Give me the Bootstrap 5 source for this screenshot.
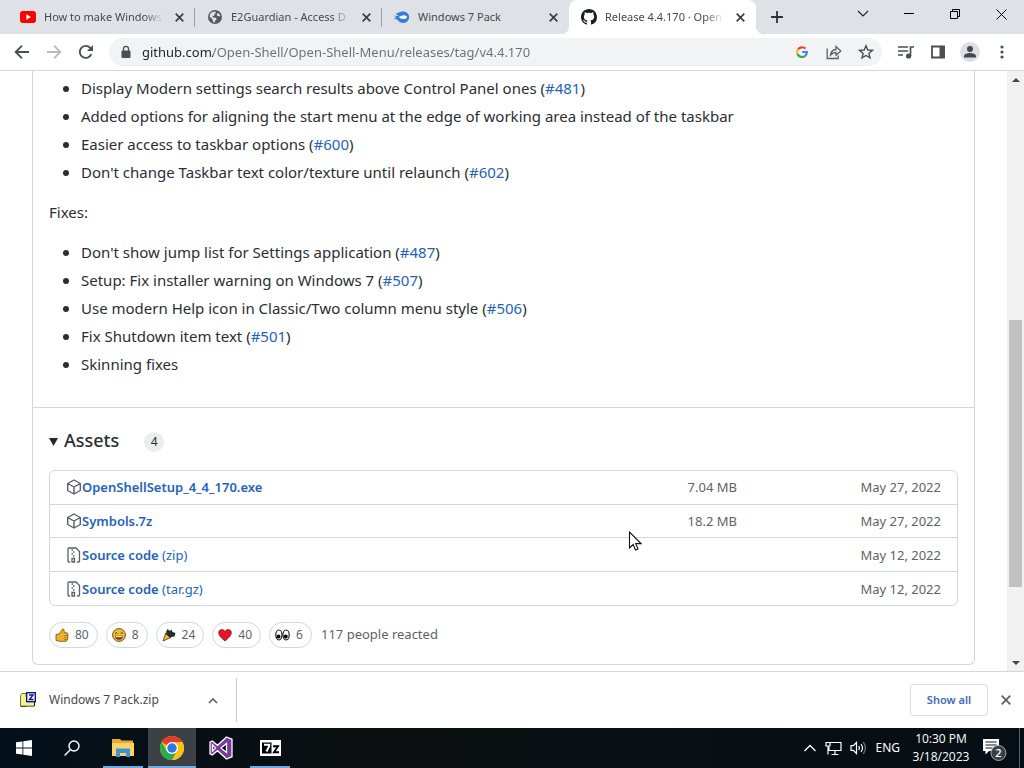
<!DOCTYPE html>
<html lang="en">
<head>
<meta charset="utf-8">
<meta name="viewport" content="width=device-width, initial-scale=1">
<title>Release 4.4.170 · Open-Shell/Open-Shell-Menu</title>
<link href="https://cdn.jsdelivr.net/npm/bootstrap@5.3.0/dist/css/bootstrap.min.css" rel="stylesheet">
<style>
:root { --ui: "Noto Sans", "Open Sans", sans-serif; --grey: #5f6368; --line: #d4d7da; --link: #2463b8; }
body { font-family: var(--ui); color: #2a2e33; background: #fff; }
button { font-family: inherit; color: inherit; }
.ghost { background: none; border: 0; padding: 0; display: flex; align-items: center; justify-content: center; flex: none; }
svg { display: block; flex: none; }

/* tab strip */
.strip { background: #dee1e6; height: 34px; padding-left: 8px; flex: none; }
.tab { flex: 0 1 187px; min-width: 0; height: 34px; padding: 0 8px 0 12px; gap: 8px; font-size: 11px; color: #45494d; position: relative; }
.tab-title { flex: 1 1 0; min-width: 0; overflow: hidden; white-space: nowrap; color: inherit; text-decoration: none;
  -webkit-mask-image: linear-gradient(to right, #000 84%, transparent); mask-image: linear-gradient(to right, #000 84%, transparent); }
.tab-title.whole { -webkit-mask-image: none; mask-image: none; }
.tab.split::after { content: ""; position: absolute; right: 0; top: 8px; width: 1px; height: 19px; background: #9a9da2; }
.tab.current { background: #fff; border-radius: 8px 8px 0 0; }
.tab.current::before, .tab.current::after { content: ""; position: absolute; bottom: 0; width: 8px; height: 8px; }
.tab.current::before { left: -8px; background: radial-gradient(circle at 0 0, transparent 8px, #fff 8px); }
.tab.current::after { right: -8px; background: radial-gradient(circle at 100% 0, transparent 8px, #fff 8px); }
.close { width: 16px; height: 16px; }
.newtab { width: 42px; height: 34px; }
.win { width: 46px; height: 28px; }

/* toolbar */
.tools { height: 37px; padding: 0 6px; flex: none; border-bottom: 1px solid #d5d7da; color: var(--grey); }
.tool { width: 32px; height: 28px; }
.omni { background: #f1f3f4; border-radius: 14px; height: 28px; margin: 0 8px 0 7px; padding-left: 10px; }
.url { font-family: var(--ui); font-size: 13px; border: 0; outline: 0; padding: 0; height: 28px; color: #5f6368; margin-left: 9px;
  background: linear-gradient(to right, #202124 71px, #6b6f73 71px); -webkit-background-clip: text; background-clip: text; -webkit-text-fill-color: transparent; }
.avatar { width: 20px; height: 20px; }

/* page */
.release { border: solid var(--line); border-width: 0 1px 1px; border-radius: 0 0 6px 6px; }
.notes { padding: 5px 16px 31px; font-size: 15px; line-height: 24px; border-bottom: 1px solid var(--line); }
.notes ul { list-style: none; padding-left: 32px; margin-bottom: 16px; }
.notes ul:last-child { margin-bottom: 0; }
.notes li + li { margin-top: 4px; }
.notes li::before { content: ""; display: inline-block; width: 6px; height: 6px; margin: 0 12px 2px -18px; border-radius: 3px; background: currentColor; }
.notes a, .assets a { color: var(--link); text-decoration: none; }
.lower { padding: 16px; }
.lower summary { list-style: none; height: 32px; margin-bottom: 14px; }
.lower summary::-webkit-details-marker { display: none; }
.lower h3 { font-size: 18px; line-height: 32px; font-weight: 500; margin: 0 25px 0 6px; }
.counter { font-size: 12px; line-height: 20px; width: 20px; height: 20px; background: #ebedee; border-radius: 10px; text-align: center; margin-top: 4px; }
.frame { border: 1px solid var(--line); border-radius: 6px; }
.assets { height: 134px; font-size: 13px; line-height: 20px; color: #5d6369; width: 100%; }
.assets td { padding: 0; }
.assets td:first-child { padding-left: 16px; }
.assets td:last-child { padding-right: 16px; width: 220px; }
.assets tr + tr { border-top: 1px solid var(--line); }
.assets b { font-weight: 600; }
.react { height: 26px; border: 1px solid var(--line); border-radius: 13px; background: #fff; padding: 0 8px 0 5px; gap: 6px; font-size: 12px; color: #5d6369; display: flex; align-items: center; }
.reacted { font-size: 13px; color: #5d6369; margin-left: 1px; }

/* scrollbar */
.rail { width: 17px; background: #f1f1f1; flex: none; }
.rail .ghost { width: 17px; height: 17px; }
.thumb { flex: 267 0 0; background: #c1c1c1; width: 13px; }

/* downloads shelf */
.shelf { height: 57px; border-top: 1px solid #d5d7da; flex: none; padding-right: 10px; color: #45494d; }
.dl { width: 237px; height: 44px; padding: 0 15px 0 20px; border-right: 1px solid #c8cacd; font-size: 12px; }
.dl-name { padding-left: 13px; }
.showall { width: 78px; height: 32px; margin-right: 10px; border: 1px solid #dadce0; border-radius: 4px; background: #fff; color: #3f69b5; font-size: 11px; font-weight: 600; padding: 0; }

/* taskbar */
.task { height: 40px; background: linear-gradient(to right, #03101a, #0b0f11 35%, #060e15); color: #fff; flex: none; }
.apps { gap: 1px; margin-left: 3px; }
.app { width: 48px; height: 40px; position: relative; }
.app.open::after { content: ""; position: absolute; left: 4px; right: 4px; bottom: 0; height: 2px; background: #6fa9df; }
.app.front { background: #3b4144; }
.app.front::after { left: 0; right: 0; }
.tray { font-size: 12px; }
.clock { font-family: "Open Sans", sans-serif; font-size: 12px; line-height: 18px; width: 58px; text-align: center; }
.note { margin: 0 12px; }
.desk { width: 5px; height: 40px; border-left: 1px solid #596066; }
.pointer { position: absolute; left: 628px; top: 531px; pointer-events: none; }
</style>
</head>
<body class="vh-100 d-flex flex-column overflow-hidden position-relative">

<header class="strip d-flex align-items-center">
  <div class="tab split d-flex align-items-center">
    <svg width="16" height="16" viewBox="0 0 16 16"><rect y="2" width="16" height="12" rx="3" fill="#f00"/><path d="M6.4 5.3v5.4L11 8z" fill="#fff"/></svg>
    <a href="#" class="tab-title">How to make Windows</a>
    <button class="ghost close" aria-label="Close tab"><svg width="9" height="9" viewBox="0 0 9 9" stroke="#3c4043" stroke-width="1.7"><path d="M.7.7l7.6 7.6M8.3.7L.7 8.3"/></svg></button>
  </div>
  <div class="tab split d-flex align-items-center">
    <svg width="16" height="16" viewBox="0 0 16 16"><circle cx="8" cy="8" r="7" fill="#55595e"/><path d="M3 5.500C4 3.300 6 2.600 8.200 2.500L9 4 7.500 5v1.500l-2 .5.5 1.500 3 .3.8 1.500-1.800 1.500v1.700c-1.500 0-2-.8-2-1.800L4.500 9 2.600 8z" fill="#dee1e6"/><path d="M10.500 4l2 1 1 2.500-1.700-.5-1.500.3-.5-1.500z" fill="#dee1e6"/></svg>
    <a href="#" class="tab-title">E2Guardian - Access D</a>
    <button class="ghost close" aria-label="Close tab"><svg width="9" height="9" viewBox="0 0 9 9" stroke="#3c4043" stroke-width="1.7"><path d="M.7.7l7.6 7.6M8.3.7L.7 8.3"/></svg></button>
  </div>
  <div class="tab d-flex align-items-center">
    <svg width="16" height="16" viewBox="0 0 16 16"><path d="M2 4.500C4.500 4 5.500 2.500 9.500 2.500a5.700 5.700 0 0 1 0 11.400c-3 0-4.800-1.400-6-3.200L0 9.500c.7-.7 1.700-.7 2.700-.9C1.500 8 .8 7.400.5 6.600c1.500.5 2.800.4 3.700-.2C3.300 6 2.500 5.400 2 4.500z" fill="#3a7bd5"/><ellipse cx="9.800" cy="8.100" rx="3" ry="1.900" fill="#fff"/><path d="M5 7.400l5-.3v2L6 9.600z" fill="#fff"/></svg>
    <a href="#" class="tab-title whole">Windows 7 Pack</a>
    <button class="ghost close" aria-label="Close tab"><svg width="9" height="9" viewBox="0 0 9 9" stroke="#3c4043" stroke-width="1.7"><path d="M.7.7l7.6 7.6M8.3.7L.7 8.3"/></svg></button>
  </div>
  <div class="tab current d-flex align-items-center">
    <svg width="16" height="16" viewBox="0 0 16 16" fill="#1b1f23"><path d="M8 0C3.580 0 0 3.580 0 8c0 3.540 2.290 6.530 5.470 7.590.4.070.55-.17.55-.38 0-.19-.01-.82-.01-1.490-2.010.37-2.530-.49-2.690-.94-.09-.23-.48-.94-.82-1.130-.28-.15-.68-.52-.01-.53.63-.01 1.080.58 1.230.82.72 1.210 1.870.87 2.330.66.07-.52.28-.87.51-1.070-1.780-.2-3.640-.89-3.640-3.950 0-.87.31-1.590.82-2.150-.08-.2-.36-1.020.08-2.120 0 0 .67-.21 2.200.82.64-.18 1.320-.27 2-.27s1.360.09 2 .27c1.530-1.040 2.200-.82 2.200-.82.44 1.100.16 1.920.08 2.120.51.56.82 1.270.82 2.150 0 3.070-1.870 3.750-3.650 3.950.29.25.54.73.54 1.480 0 1.070-.01 1.930-.01 2.200 0 .21.15.46.55.38A8.010 8.010 0 0 0 16 8c0-4.420-3.580-8-8-8z"/></svg>
    <a href="#" class="tab-title">Release 4.4.170 · Open</a>
    <button class="ghost close" aria-label="Close tab"><svg width="9" height="9" viewBox="0 0 9 9" stroke="#3c4043" stroke-width="1.7"><path d="M.7.7l7.6 7.6M8.3.7L.7 8.3"/></svg></button>
  </div>
  <button class="ghost newtab" aria-label="New tab"><svg width="12" height="12" viewBox="0 0 12 12" stroke="#2f3337" stroke-width="1.800"><path d="M6 0v12M0 6h12"/></svg></button>
  <div class="d-flex ms-auto align-self-start">
    <button class="ghost win" aria-label="Search tabs"><svg width="12" height="8" viewBox="0 0 12 8" fill="none" stroke="#222" stroke-width="1.100"><path d="M1 1l5 5 5-5"/></svg></button>
    <button class="ghost win" aria-label="Minimise"><svg width="10" height="2" viewBox="0 0 10 2"><path d="M0 0h10v1H0z"/></svg></button>
    <button class="ghost win" aria-label="Restore"><svg width="10" height="10" viewBox="0 0 10 10" fill="none" stroke="#000"><path d="M.5 2.500h7v7h-7zM2.500 2.500v-2h7v7h-2"/></svg></button>
    <button class="ghost win" aria-label="Close"><svg width="11" height="11" viewBox="0 0 11 11" stroke="#000"><path d="M.5.5l10 10M10.500.5l-10 10"/></svg></button>
  </div>
</header>

<nav class="tools d-flex align-items-center" aria-label="Browser toolbar">
  <button class="ghost tool" aria-label="Back"><svg width="16" height="16" viewBox="0 0 16 16" fill="none" stroke="#4b4f53" stroke-width="1.900"><path d="M15 8H2M8 1.700L1.700 8 8 14.300"/></svg></button>
  <button class="ghost tool" aria-label="Forward"><svg width="16" height="16" viewBox="0 0 16 16" fill="none" stroke="#b9bbbe" stroke-width="1.900"><path d="M1 8h13M8 1.700L14.300 8 8 14.300"/></svg></button>
  <button class="ghost tool" aria-label="Reload"><svg width="16" height="16" viewBox="0 0 16 16"><path d="M13.300 10.200A6 6 0 1 1 12.200 3.800L14 5.500" fill="none" stroke="#4b4f53" stroke-width="1.900"/><path d="M15 1v6H9z" fill="#4b4f53"/></svg></button>
  <div class="omni d-flex align-items-center flex-grow-1">
    <svg width="14" height="14" viewBox="0 0 14 14"><rect x="2.500" y="5.500" width="9" height="7.500" rx="1" fill="#4b4f53"/><path d="M4.500 6V3.800a2.500 2.500 0 0 1 5 0V6" fill="none" stroke="#4b4f53" stroke-width="1.300"/></svg>
    <input class="url flex-grow-1" type="text" aria-label="Address" value="github.com/Open-Shell/Open-Shell-Menu/releases/tag/v4.4.170">
    <button class="ghost tool" aria-label="Search with Google"><svg width="12" height="12" viewBox="0 0 12 12" fill="none" stroke-width="2.200"><path d="M2 3.500A4.900 4.900 0 0 1 9.500 2.600" stroke="#ea4335"/><path d="M1.500 8.200a4.900 4.900 0 0 1 .3-4.500" stroke="#fbbc05"/><path d="M1.500 8a4.900 4.900 0 0 0 7.800 1.700" stroke="#34a853"/><path d="M9 9.800A4.500 4.500 0 0 0 10.900 6H6.200" stroke="#4285f4"/></svg></button>
    <button class="ghost tool" aria-label="Share"><svg width="16" height="16" viewBox="0 0 16 16" fill="none" stroke="#5f6368" stroke-width="1.300"><path d="M1.200 4.500v10h11v-3M4.500 11C5 7.500 7 5.700 10 5.500V2.500l4.800 4.500-4.800 4.300V8.500C7.500 8.500 5.800 9.300 4.500 11z"/></svg></button>
    <button class="ghost tool" aria-label="Bookmark"><svg width="16" height="16" viewBox="0 0 16 16" fill="none" stroke="#4b4f53" stroke-width="1.400"><path d="M8 1.800l1.800 4.200 4.600.4-3.500 3 1.100 4.500L8 11.500l-4 2.400 1.100-4.500-3.500-3L6.200 6z"/></svg></button>
  </div>
  <button class="ghost tool" aria-label="Media controls"><svg width="18" height="16" viewBox="0 0 18 16"><path d="M1 3h10M1 7h10M1 11h5M13.500 12V3H17" fill="none" stroke="#4b4f53" stroke-width="1.700"/><circle cx="11.600" cy="12" r="2.600" fill="#4b4f53"/></svg></button>
  <button class="ghost tool" aria-label="Side panel"><svg width="14" height="14" viewBox="0 0 14 14"><path d="M1 1.500h12v11H1z" fill="none" stroke="#4b4f53" stroke-width="1.800"/><path d="M8.500 1H14v12H8.500z" fill="#4b4f53"/></svg></button>
  <button class="ghost tool" aria-label="Profile"><svg class="avatar" viewBox="0 0 20 20"><circle cx="10" cy="10" r="10" fill="#dcdfe5"/><circle cx="10" cy="7" r="3" fill="#44484e"/><path d="M4 15.500v-1.300c0-2 3.500-3.200 6-3.200s6 1.200 6 3.200v1.300z" fill="#44484e"/></svg></button>
  <button class="ghost tool" aria-label="Menu"><svg width="4" height="14" viewBox="0 0 4 14" fill="#4b4f53"><circle cx="2" cy="2" r="1.600"/><circle cx="2" cy="7" r="1.600"/><circle cx="2" cy="12" r="1.600"/></svg></button>
</nav>

<div class="d-flex flex-grow-1 overflow-hidden">
  <main class="flex-grow-1 overflow-hidden px-4">
    <article class="release mx-2">
      <section class="notes">
        <ul>
          <li>Display Modern settings search results above Control Panel ones (<a href="#">#481</a>)</li>
          <li>Added options for aligning the start menu at the edge of working area instead of the taskbar</li>
          <li>Easier access to taskbar options (<a href="#">#600</a>)</li>
          <li>Don't change Taskbar text color/texture until relaunch (<a href="#">#602</a>)</li>
        </ul>
        <p class="mb-3">Fixes:</p>
        <ul>
          <li>Don't show jump list for Settings application (<a href="#">#487</a>)</li>
          <li>Setup: Fix installer warning on Windows 7 (<a href="#">#507</a>)</li>
          <li>Use modern Help icon in Classic/Two column menu style (<a href="#">#506</a>)</li>
          <li>Fix Shutdown item text (<a href="#">#501</a>)</li>
          <li>Skinning fixes</li>
        </ul>
      </section>
      <section class="lower">
        <details open>
          <summary class="d-flex align-items-center">
            <svg class="mt-1" width="9" height="8" viewBox="0 0 9 8" fill="#24292f"><path d="M0 0h9L4.500 8z"/></svg>
            <h3>Assets</h3>
            <span class="counter">4</span>
          </summary>
          <div class="frame">
            <table class="assets">
              <tbody>
                <tr><td><div class="d-flex align-items-center"><svg width="16" height="16" viewBox="0 0 16 16" fill="none" stroke="#57606a" stroke-width="1.400" stroke-linejoin="round"><path d="M8 1l6.300 3.500v7L8 15l-6.300-3.500v-7zM1.700 4.500L8 8l6.300-3.500M8 8v7"/></svg><a href="#"><b>OpenShellSetup_4_4_170.exe</b></a></div></td><td class="text-end">7.04 MB</td><td class="text-end">May 27, 2022</td></tr>
                <tr><td><div class="d-flex align-items-center"><svg width="16" height="16" viewBox="0 0 16 16" fill="none" stroke="#57606a" stroke-width="1.400" stroke-linejoin="round"><path d="M8 1l6.300 3.500v7L8 15l-6.300-3.500v-7zM1.700 4.500L8 8l6.300-3.500M8 8v7"/></svg><a href="#"><b>Symbols.7z</b></a></div></td><td class="text-end">18.2 MB</td><td class="text-end">May 27, 2022</td></tr>
                <tr><td><div class="d-flex align-items-center"><svg width="16" height="16" viewBox="0 0 16 16" fill="none" stroke="#57606a" stroke-width="1.300"><path d="M4 15H3a1 1 0 0 1-1-1V2a1 1 0 0 1 1-1h7l3.500 3.500V14a1 1 0 0 1-1 1H11M6 15v-3.500h2.500V15zM5.500 3H7M7 5h1.500M5.500 7H7M7 9h1.500"/></svg><a href="#"><b>Source code</b> (zip)</a></div></td><td></td><td class="text-end">May 12, 2022</td></tr>
                <tr><td><div class="d-flex align-items-center"><svg width="16" height="16" viewBox="0 0 16 16" fill="none" stroke="#57606a" stroke-width="1.300"><path d="M4 15H3a1 1 0 0 1-1-1V2a1 1 0 0 1 1-1h7l3.500 3.500V14a1 1 0 0 1-1 1H11M6 15v-3.500h2.500V15zM5.500 3H7M7 5h1.500M5.500 7H7M7 9h1.500"/></svg><a href="#"><b>Source code</b> (tar.gz)</a></div></td><td></td><td class="text-end">May 12, 2022</td></tr>
              </tbody>
            </table>
          </div>
        </details>
        <div class="d-flex align-items-center gap-2 mt-3">
          <button class="react"><svg width="14" height="14" viewBox="0 0 14 14"><path d="M1 6.500L4 6l3.500-5 1.500.5.2 3L12.500 5l.5 2-.5 5-1.500 1.300H5L1 12.500z" fill="#eeb32b" stroke="#6b4a10" stroke-width=".8"/><path d="M9 7.500h3.500M9.200 9.500h3.300M9 11.500h3" stroke="#a36e10" stroke-width=".7"/></svg>80</button>
          <button class="react"><svg width="14" height="14" viewBox="0 0 14 14"><circle cx="7" cy="7" r="6.400" fill="#f2bd36" stroke="#5b4310" stroke-width=".9"/><path d="M3 5.500q1.200-1.500 2.400 0M8.600 5.500q1.200-1.500 2.400 0" fill="none" stroke="#4b3510"/><path d="M3 7.800h8a4 4 0 0 1-8 0z" fill="#6b4012"/><path d="M3.700 8.200h6.600v1H3.700z" fill="#fff"/></svg>8</button>
          <button class="react"><svg width="14" height="14" viewBox="0 0 14 14"><path d="M1 13L3.800 5l5 4.500z" fill="#f0b93a" stroke="#4b3510" stroke-width=".8"/><path d="M4 4l1.500-3L8 3l1.500-1.500 1 2.500L13.500 5l-1 3.500-3 .5-2-1z" fill="#25282b"/><path d="M3.800 5l5 4.500" stroke="#1b1b1b" stroke-width="1.500"/><path d="M7 4.500l1 1" stroke="#338" /></svg>24</button>
          <button class="react"><svg width="14" height="14" viewBox="0 0 14 14"><path d="M7 13C4.500 10.800.7 8 .7 4.500.7 1.200 5.300.4 7 3.500c1.700-3.100 6.300-2.300 6.300 1C13.300 8 9.500 10.800 7 13z" fill="#e8142c" stroke="#701018" stroke-width=".7"/></svg>40</button>
          <button class="react"><svg width="15" height="14" viewBox="0 0 15 14"><g fill="#fff" stroke="#1c1c1c" stroke-width="1.200"><ellipse cx="3.900" cy="7" rx="3.100" ry="5"/><ellipse cx="11.100" cy="7" rx="3.100" ry="5"/></g><circle cx="3.600" cy="8.500" r="1.900"/><circle cx="10.800" cy="8.500" r="1.900"/></svg>6</button>
          <span class="reacted">117 people reacted</span>
        </div>
      </section>
    </article>
  </main>
  <div class="rail d-flex flex-column align-items-center">
    <button class="ghost" aria-label="Scroll up"><svg width="8" height="4" viewBox="0 0 8 4" fill="#444"><path d="M0 4l4-4 4 4z"/></svg></button>
    <span style="flex:232 0 0"></span>
    <span class="thumb"></span>
    <span style="flex:67 0 0"></span>
    <button class="ghost" aria-label="Scroll down"><svg width="8" height="4" viewBox="0 0 8 4" fill="#444"><path d="M0 0l4 4 4-4z"/></svg></button>
  </div>
</div>

<section class="shelf d-flex align-items-center" aria-label="Downloads">
  <div class="dl d-flex align-items-center">
    <svg width="16" height="16" viewBox="0 0 16 16"><path d="M.5 3.500L2 1.500h4v13H.5z" fill="#f4f28a" stroke="#77762d"/><path d="M1 14h13.500V5" fill="#f4f28a" stroke="#111"/><path d="M1 5h13v8.500H1z" fill="#f4f28a"/><rect x="6.700" y=".7" width="8.600" height="9" fill="#fff" stroke="#14148c" stroke-width="1.400"/><path d="M9 3h4L9.500 7.500h4" fill="none" stroke="#14148c" stroke-width="1.400"/></svg>
    <span class="dl-name flex-grow-1">Windows 7 Pack.zip</span>
    <button class="ghost close" aria-label="Download options"><svg width="10" height="7" viewBox="0 0 10 7" fill="none" stroke="#5f6368" stroke-width="1.700"><path d="M1 6l4-4 4 4"/></svg></button>
  </div>
  <button class="showall ms-auto">Show all</button>
  <button class="ghost close" aria-label="Close downloads bar"><svg width="10" height="10" viewBox="0 0 10 10" stroke="#5f6368" stroke-width="1.800"><path d="M.7.7l8.600 8.600M9.300.7L.7 9.300"/></svg></button>
</section>

<footer class="task d-flex align-items-center">
  <button class="ghost app" aria-label="Start"><svg width="16" height="16" viewBox="0 0 16 16" fill="#fff"><path d="M0 2.300L6.500 1.400v6.100H0zM7.300 1.300L16 0v7.500H7.300zM0 8.400h6.500v6.200L0 13.700zM7.300 8.400H16V16l-8.700-1.300z"/></svg></button>
  <button class="ghost app" aria-label="Search"><svg width="16" height="16" viewBox="0 0 16 16" fill="none" stroke="#fff" stroke-width="1.400"><circle cx="10" cy="6" r="5"/><path d="M6.300 9.700L.6 15.400"/></svg></button>
  <div class="apps d-flex">
    <button class="ghost app open" aria-label="File Explorer"><svg width="22" height="18" viewBox="0 0 22 18"><path d="M0 0h8l1.500 1.500H21V16H0z" fill="#e9a93a"/><path d="M0 4h22v13H0z" fill="#fbd367"/><path d="M4 9.500h14V18h-4v-4H8v4H4z" fill="#3f93d2"/></svg></button>
    <button class="ghost app open front" aria-label="Chrome"><svg width="24" height="24" viewBox="0 0 24 24"><circle cx="12" cy="12" r="12" fill="#fbc116"/><path d="M12 12L1.600 6A12 12 0 0 1 22.400 6z" fill="#e33b2e"/><path d="M1.600 6A12 12 0 0 0 12 24l5.200-9H6.800z" fill="#2da94f"/><path d="M17.200 15L12 24A12 12 0 0 0 22.400 6H12z" fill="#fbc116"/><circle cx="12" cy="12" r="6" fill="#fff"/><circle cx="12" cy="12" r="4.700" fill="#2f77df"/></svg></button>
    <button class="ghost app" aria-label="Visual Studio"><svg width="24" height="24" viewBox="0 0 24 24"><path fill-rule="evenodd" d="M17.500 1L23 3.300v17.400L17.500 23 8.500 14.700 3.300 19 1 17.800V6.200L3.300 5l5.200 4.300zM17.500 7.500L12 12l5.500 4.500zM3.500 8.800v6.400L6.500 12z" fill="#7a3a9c" stroke="#fff" stroke-width="1.300"/></svg></button>
    <button class="ghost app open" aria-label="7-Zip"><svg width="21" height="16" viewBox="0 0 21 16"><path d="M0 0h21v16H0z" fill="#fff"/><path d="M2 2.500h9.500v11H2z"/><path d="M4 4.800h5.200v1.500L6.500 11.500" fill="none" stroke="#fff" stroke-width="2"/><path d="M13 6.300h5l-4 6h5" fill="none" stroke="#000" stroke-width="1.900"/></svg></button>
  </div>
  <div class="tray d-flex align-items-center ms-auto">
    <button class="ghost me-2" aria-label="Hidden icons"><svg width="14" height="8" viewBox="0 0 14 8" fill="none" stroke="#fff" stroke-width="1.300"><path d="M1.500 7L7 1.500 12.500 7"/></svg></button>
    <svg class="me-2" width="17" height="15" viewBox="0 0 17 15" fill="none" stroke="#fff" stroke-width="1.200"><path d="M5 1.500h11v8H4V6M10 9.500v3.500M6.500 13.500h7M1 1.500h4v3.500H1zM3 5v8.500"/></svg>
    <svg width="17" height="14" viewBox="0 0 17 14" fill="none" stroke="#fff" stroke-width="1.200"><path d="M1 4.700h2.300L6.500 1.500v11L3.300 9.300H1zM8.700 4.800q1.600 2.200 0 4.400M11 3q3 4 0 8"/><path d="M13.300 1.200q4.200 5.800 0 11.600" stroke="#777"/></svg>
    <span class="ms-2 me-2">ENG</span>
    <div class="clock ms-1">10:30 PM<br>3/18/2023</div>
    <button class="ghost note" aria-label="Notifications"><svg width="25" height="26" viewBox="0 0 25 26"><path d="M1 4h16v12H7l-3.500 3.500V16H1z" fill="#fff"/><path d="M3.500 7h11M3.500 10h11M3.500 13h7" stroke="#10171c" stroke-width="1.200"/><circle cx="16.500" cy="18" r="7.500" fill="#3b4044" stroke="#a0a3a5"/><text x="16.500" y="22" font-size="11" text-anchor="middle" fill="#fff" font-family="Open Sans, sans-serif" font-weight="600">2</text></svg></button>
    <span class="desk"></span>
  </div>
</footer>

<svg class="pointer" width="14" height="21" viewBox="0 0 14 21"><path d="M1.500 1v16l3.700-3.500 2.300 5.500 2.500-1-2.300-5.400H13z" fill="#fff" stroke="#111" stroke-width="1.100"/></svg>
<script src="https://cdn.jsdelivr.net/npm/bootstrap@5.3.0/dist/js/bootstrap.bundle.min.js"></script>
</body>
</html>
